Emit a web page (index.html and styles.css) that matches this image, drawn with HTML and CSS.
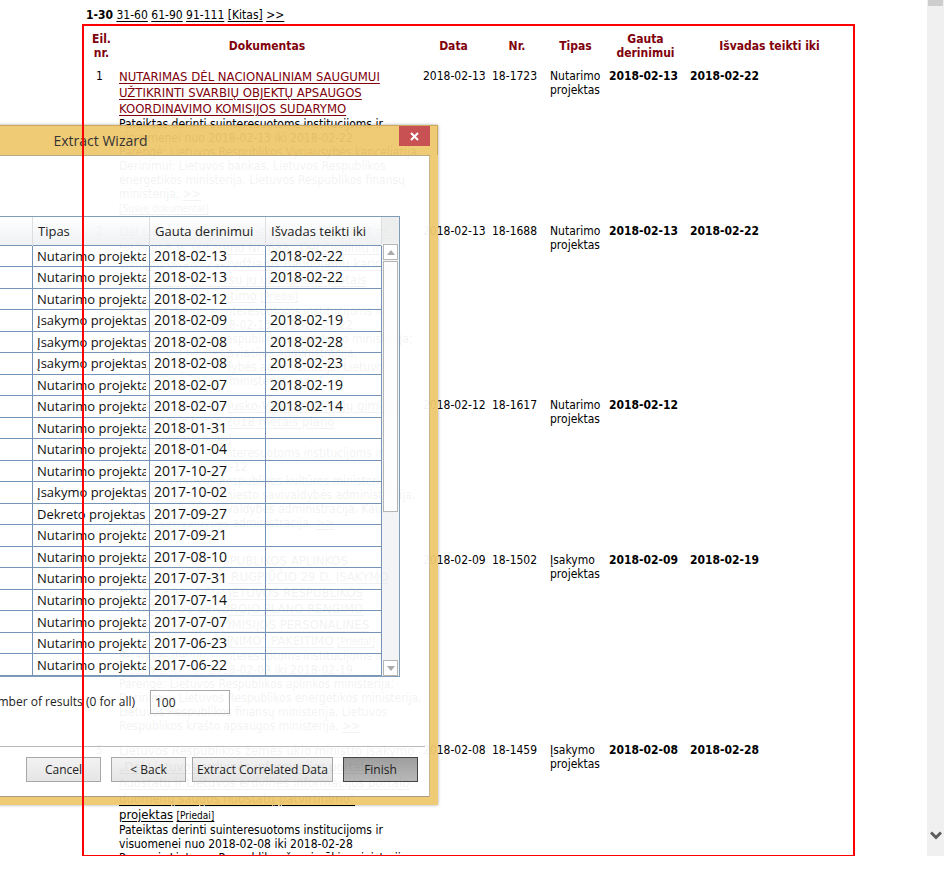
FILE: index.html
```html
<!DOCTYPE html>
<html lang="lt">
<head>
<meta charset="utf-8">
<title>Extract Wizard</title>
<link rel="stylesheet" href="styles.css">
</head>
<body>
<div class="viewport">
  <main class="page">
    <nav class="pager"><b>1-30</b> <a href="#">31-60</a> <a href="#">61-90</a> <a href="#">91-111</a> <a href="#">[Kitas]</a> <a href="#">&gt;&gt;</a></nav>
    <section class="results">
      <table class="docs">
        <colgroup><col class="c-no"><col class="c-doc"><col class="c-date"><col class="c-nr"><col class="c-type"><col class="c-got"><col></colgroup>
        <thead>
          <tr><th>Eil.<br>nr.</th><th>Dokumentas</th><th>Data</th><th>Nr.</th><th>Tipas</th><th>Gauta derinimui</th><th>Išvadas teikti iki</th></tr>
        </thead>
        <tbody>
          <tr class="h-short">
            <td>1</td>
            <td><a class="title visited" href="#">NUTARIMAS DĖL NACIONALINIAM SAUGUMUI<br>UŽTIKRINTI SVARBIŲ OBJEKTŲ APSAUGOS<br>KOORDINAVIMO KOMISIJOS SUDARYMO</a><br>Pateiktas derinti suinteresuotoms institucijoms ir<br>visuomenei nuo 2018-02-13 iki 2018-02-22<br>Parengė: Lietuvos Respublikos Vyriausybės kanceliarija;<br>Derinimui: Lietuvos bankas, Lietuvos Respublikos<br>energetikos ministerija, Lietuvos Respublikos finansų<br>ministerija, <a href="#">&gt;&gt;</a><br><a class="small" href="#">[Susiję dokumentai]</a></td>
            <td>2018-02-13</td><td>18-1723</td><td>Nutarimo projektas</td><td><b>2018-02-13</b></td><td><b>2018-02-22</b></td>
          </tr>
          <tr class="h-medium">
            <td>2</td>
            <td><a class="title" href="#">Dėl Lietuvos Respublikos Vyriausybės 2004 m.<br>birželio 5 d. nutarimo Nr. 685 „Dėl Civilinių ir<br>civilinių orlaivių skrydžiams naudojamų karinių<br>aerodromų sąrašo su jų užimamais plotais<br>patvirtinimo“ pakeitimo</a> <a class="small" href="#">[Priedai]</a><br>Pateiktas derinti suinteresuotoms institucijoms ir<br>visuomenei nuo 2018-02-13 iki 2018-02-22<br>Parengė: Lietuvos Respublikos susisiekimo ministerija;<br>Derinimui: Civilinės aviacijos administracija,<br>Druskininkų savivaldybės administracija, Lietuvos<br>Respublikos finansų ministerija, <a href="#">&gt;&gt;</a></td>
            <td>2018-02-13</td><td>18-1688</td><td>Nutarimo projektas</td><td><b>2018-02-13</b></td><td><b>2018-02-22</b></td>
          </tr>
          <tr class="h-short">
            <td>3</td>
            <td><a class="title" href="#">Dėl Adolfo Ramanausko-Vanago 100-ųjų gimimo<br>metinių minėjimo 2018 metais plano<br>patvirtinimo</a> <a class="small" href="#">[Priedai]</a><br>Pateiktas derinti suinteresuotoms institucijoms ir<br>visuomenei 2018-02-12<br>Parengė: Lietuvos Respublikos kultūros ministerija;<br>Derinimui: Alytaus miesto savivaldybės administracija,<br>Jurbarko rajono savivaldybės administracija, Kauno<br>miesto savivaldybės administracija, <a href="#">&gt;&gt;</a></td>
            <td>2018-02-12</td><td>18-1617</td><td>Nutarimo projektas</td><td><b>2018-02-12</b></td><td></td>
          </tr>
          <tr class="h-tall">
            <td>4</td>
            <td><a class="title" href="#">DĖL LIETUVOS RESPUBLIKOS APLINKOS<br>MINISTRO 2017 M. RUGPJŪČIO 29 D. ĮSAKYMO<br>NR. D1-696 „DĖL LIETUVOS RESPUBLIKOS<br>TERITORIJOS BENDROJO PLANO RENGIMO<br>KOORDINAVIMO KOMISIJOS PERSONALINĖS<br>SUDĖTIES PATVIRTINIMO“ PAKEITIMO</a> <a class="small" href="#">[Priedai]</a><br>Pateiktas derinti suinteresuotoms institucijoms ir<br>visuomenei nuo 2018-02-09 iki 2018-02-19<br>Parengė: Lietuvos Respublikos aplinkos ministerija;<br>Derinimui: Lietuvos Respublikos energetikos ministerija,<br>Lietuvos Respublikos finansų ministerija, Lietuvos<br>Respublikos krašto apsaugos ministerija, <a href="#">&gt;&gt;</a></td>
            <td>2018-02-09</td><td>18-1502</td><td>Įsakymo projektas</td><td><b>2018-02-09</b></td><td><b>2018-02-19</b></td>
          </tr>
          <tr>
            <td>5</td>
            <td><a class="title" href="#">Lietuvos Respublikos žemės ūkio ministro įsakymo<br>„Dėl Lietuvos erdvinės informacijos portalo<br>nuostatų ir Lietuvos erdvinės informacijos portalo<br>duomenų saugos nuostatų patvirtinimo“<br>projektas</a> <a class="small" href="#">[Priedai]</a><br>Pateiktas derinti suinteresuotoms institucijoms ir<br>visuomenei nuo 2018-02-08 iki 2018-02-28<br>Parengė: Lietuvos Respublikos žemės ūkio ministerija;</td>
            <td>2018-02-08</td><td>18-1459</td><td>Įsakymo projektas</td><td><b>2018-02-08</b></td><td><b>2018-02-28</b></td>
          </tr>
        </tbody>
      </table>
    </section>
  </main>
  <div class="page-scroll">
    <div class="page-thumb"></div>
    <svg width="12" height="10" viewBox="0 0 12 10"><path d="M1 1.500 6 6.500 11 1.500" fill="none" stroke="#5c5c5c" stroke-width="3"/></svg>
  </div>
</div>

<div class="window" role="dialog" aria-labelledby="wizard-title">
  <header class="titlebar">
    <h1 id="wizard-title">Extract Wizard</h1>
    <button class="close" aria-label="Close"><svg width="9" height="9" viewBox="0 0 9 9"><path d="M1 1 8 8M8 1 1 8" stroke="#fff" stroke-width="2"/></svg></button>
  </header>
  <div class="client">
    <div class="grid">
      <div class="grid-body">
      <table class="data">
        <colgroup><col><col class="d-type"><col class="d-date"><col class="d-date"></colgroup>
        <thead><tr><th></th><th>Tipas</th><th>Gauta derinimui</th><th>Išvadas teikti iki</th></tr></thead>
        <tbody>
          <tr><td></td><td><span>Nutarimo projektas</span></td><td><span>2018-02-13</span></td><td><span>2018-02-22</span></td></tr>
          <tr><td></td><td><span>Nutarimo projektas</span></td><td><span>2018-02-13</span></td><td><span>2018-02-22</span></td></tr>
          <tr><td></td><td><span>Nutarimo projektas</span></td><td><span>2018-02-12</span></td><td></td></tr>
          <tr><td></td><td><span>Įsakymo projektas</span></td><td><span>2018-02-09</span></td><td><span>2018-02-19</span></td></tr>
          <tr><td></td><td><span>Įsakymo projektas</span></td><td><span>2018-02-08</span></td><td><span>2018-02-28</span></td></tr>
          <tr><td></td><td><span>Įsakymo projektas</span></td><td><span>2018-02-08</span></td><td><span>2018-02-23</span></td></tr>
          <tr><td></td><td><span>Nutarimo projektas</span></td><td><span>2018-02-07</span></td><td><span>2018-02-19</span></td></tr>
          <tr><td></td><td><span>Nutarimo projektas</span></td><td><span>2018-02-07</span></td><td><span>2018-02-14</span></td></tr>
          <tr><td></td><td><span>Nutarimo projektas</span></td><td><span>2018-01-31</span></td><td></td></tr>
          <tr><td></td><td><span>Nutarimo projektas</span></td><td><span>2018-01-04</span></td><td></td></tr>
          <tr><td></td><td><span>Nutarimo projektas</span></td><td><span>2017-10-27</span></td><td></td></tr>
          <tr><td></td><td><span>Įsakymo projektas</span></td><td><span>2017-10-02</span></td><td></td></tr>
          <tr><td></td><td><span>Dekreto projektas</span></td><td><span>2017-09-27</span></td><td></td></tr>
          <tr><td></td><td><span>Nutarimo projektas</span></td><td><span>2017-09-21</span></td><td></td></tr>
          <tr><td></td><td><span>Nutarimo projektas</span></td><td><span>2017-08-10</span></td><td></td></tr>
          <tr><td></td><td><span>Nutarimo projektas</span></td><td><span>2017-07-31</span></td><td></td></tr>
          <tr><td></td><td><span>Nutarimo projektas</span></td><td><span>2017-07-14</span></td><td></td></tr>
          <tr><td></td><td><span>Nutarimo projektas</span></td><td><span>2017-07-07</span></td><td></td></tr>
          <tr><td></td><td><span>Nutarimo projektas</span></td><td><span>2017-06-23</span></td><td></td></tr>
          <tr><td></td><td><span>Nutarimo projektas</span></td><td><span>2017-06-22</span></td><td></td></tr>
        </tbody>
      </table>
      </div>
      <div class="grid-scroll">
        <div class="corner"></div>
        <div class="arrow"><svg width="8" height="5" viewBox="0 0 8 5"><path d="M0 5 4 0 8 5Z" fill="#aaa"/></svg></div>
        <div class="thumb"></div>
        <div class="arrow"><svg width="8" height="5" viewBox="0 0 8 5"><path d="M0 0 4 5 8 0Z" fill="#aaa"/></svg></div>
      </div>
    </div>
    <div class="limit">
      <label for="limit">Number of results (0 for all)</label>
      <input id="limit" type="text" value="100">
    </div>
    <footer class="actions">
      <button class="btn">Cancel</button>
      <button class="btn">&lt; Back</button>
      <button class="btn extract">Extract Correlated Data</button>
      <button class="btn finish">Finish</button>
    </footer>
  </div>
</div>
</body>
</html>
```
FILE: styles.css
```css
* { box-sizing: border-box; }

body {
  margin: 0;
  height: 100vh;
  overflow: hidden;
  position: relative;
  background: #fff;
  color: #000;
  font: 12px/14px "DejaVu Sans Condensed", "DejaVu Sans", sans-serif;
}

a { color: inherit; text-underline-offset: 2px; }

.viewport {
  display: flex;
  height: calc(100vh - 25px);
}

.page {
  flex: 1;
  min-width: 0;
  display: flex;
  flex-direction: column;
  padding: 8px 72px 0 82px;
}

.pager { padding: 0 0 2px 4px; }

/* Red outline is painted above the dialog */
.results {
  flex: 1;
  min-height: 0;
  overflow: hidden;
  position: relative;
  padding: 3px 2px 0;
}

.results::after {
  content: "";
  position: absolute;
  inset: 0;
  z-index: 3;
  border: 2px solid #f00;
  border-bottom-width: 1px;
  pointer-events: none;
}

.docs {
  width: 100%;
  table-layout: fixed;
  border-collapse: collapse;
}

.docs td { padding: 4px; vertical-align: top; }
.docs tbody td:first-child { text-align: center; }
.docs th { color: #80000c; height: 38px; padding: 0 2px; }
.docs th:first-child { padding: 0 0 0 4px; }
.c-no { width: 31px; }
.c-doc { width: 304px; }
.c-date { width: 69px; }
.c-nr { width: 58px; }
.c-type { width: 59px; }
.c-got { width: 81px; }
.docs td:nth-child(2), .docs td:nth-child(3) { white-space: nowrap; }
.h-short { height: 155px; }
.h-medium { height: 174px; }
.h-tall { height: 190px; }

.title { font-size: 13px; line-height: 16px; }
.visited { color: #80000c; }
.small { font-size: 10px; line-height: 12px; }

.page-scroll {
  width: 17px;
  display: flex;
  flex-direction: column;
  justify-content: space-between;
  align-items: center;
  background: #f0f0f0;
  padding-bottom: 15px;
}

.page-thumb { width: 15px; height: 6px; background: #cdcdcd; }

/* Dialog window, partly off the left edge */
.window {
  position: absolute;
  z-index: 2;
  left: -236px;
  top: 125px;
  width: 674px;
  font: 12px/16px "Open Sans", "Noto Sans", sans-serif;
  color: #222;
  box-shadow: 0 0 3px rgba(0, 0, 0, .35);
}

.titlebar {
  display: flex;
  height: 30px;
  padding-right: 7px;
  background: rgba(239, 200, 110, .95);
  border: 1px solid #cba65c;
  border-width: 1px 1px 0 0;
}

.titlebar h1 {
  flex: 1;
  margin: 0;
  padding-left: 38px;
  font-size: 14px;
  line-height: 29px;
  font-weight: 400;
  text-align: center;
  color: #333;
}

.close {
  width: 31px;
  height: 20px;
  border: 0;
  padding: 0;
  display: grid;
  place-items: center;
  background: #c75153;
}

.client {
  padding: 61px 30px 15px;
  background: rgba(255, 255, 255, .95);
  background-clip: padding-box;
  border: solid rgba(239, 200, 110, .95);
  border-width: 0 8px 8px;
  box-shadow: inset 0 1px #b9a984, inset -1px 0 #c9b68e, inset 0 -1px #a99c82;
}

.grid {
  display: flex;
  height: 461px;
  border: 1px solid #7f9db9;
}

.grid-body { flex: 1; min-width: 0; }

.data {
  width: 100%;
  height: 459px;
  table-layout: fixed;
  border-collapse: collapse;
  font-size: 13px;
}

.d-type { width: 117px; }
.d-date { width: 116px; }

.data th {
  height: 28px;
  padding: 0 5px;
  font-weight: 400;
  text-align: left;
  white-space: nowrap;
  background: linear-gradient(rgba(255, 255, 255, .5), rgba(232, 234, 238, .7));
  border-right: 1px solid #dedede;
}

.data td {
  padding: 0 3px 0 4px;
  border: 1px solid #7594b8;
  border-left: 0;
  line-height: 16px;
  color: #111;
}

.data td span {
  display: block;
  overflow: hidden;
  white-space: nowrap;
}

.data td:nth-child(2) span { background: #fff; }
.data td:nth-child(3) span { background: #fff; width: 74px; }
.data td:nth-child(4) span { width: 74px; }
.data td:nth-child(n+3) { font-size: 14px; }

.grid-scroll {
  width: 17px;
  display: flex;
  flex-direction: column;
  align-items: center;
  gap: 1px;
  background: rgba(225, 227, 230, .4);
}

.corner { width: 100%; height: 26px; background: rgba(232, 232, 232, .5); }

.arrow {
  width: 15px;
  height: 16px;
  display: grid;
  place-items: center;
  background: #fff;
  border: 1px solid #b5b5b5;
}

.thumb {
  width: 15px;
  height: 251px;
  margin-bottom: auto;
  background: rgba(255, 255, 255, .8);
  border: 1px solid #b5b5b5;
}

.limit {
  display: flex;
  align-items: center;
  justify-content: flex-end;
  gap: 15px;
  margin: 13px 170px 32px 0;
}

.limit input {
  width: 80px;
  height: 24px;
  padding: 0 4px;
  font: inherit;
  color: inherit;
  background: transparent;
  border: 1px solid #aaa;
}

.actions {
  display: flex;
  justify-content: flex-end;
  gap: 10px;
  margin-right: -25px;
  padding: 10px 7px 0 0;
  border-top: 1px solid #bbb;
}

.btn {
  height: 25px;
  width: 75px;
  padding: 0;
  font: inherit;
  color: #222;
  border: 1px solid #a8a8a8;
  background: linear-gradient(rgba(0, 0, 0, .05), rgba(0, 0, 0, .1));
}

.extract { width: 141px; margin-left: -4px; }
.finish { border-color: #444; background: linear-gradient(rgba(0, 0, 0, .38), rgba(0, 0, 0, .28)); }
```
